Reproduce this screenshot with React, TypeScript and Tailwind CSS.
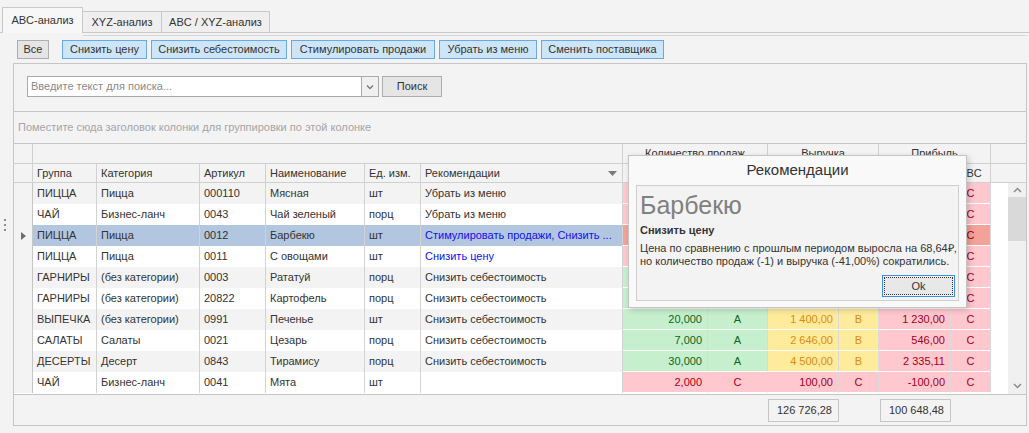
import React from "react";

type Tone = "g" | "y" | "r";
type Row = {
  grp: string;
  cat: string;
  art: string;
  name: string;
  unit: string;
  rec: string;
  recBlue?: boolean;
  q: string;
  qa: string;
  qt: Tone;
  v: string;
  va: string;
  vt: Tone;
  p: string;
  pa: string;
  pt: Tone;
};

// Values of rows 1-6 in the numeric columns lie under the popup and are not visible.
const rows: Row[] = [
  { grp: "ПИЦЦА", cat: "Пицца", art: "000110", name: "Мясная", unit: "шт", rec: "Убрать из меню", q: "", qa: "", qt: "r", v: "", va: "", vt: "r", p: "", pa: "C", pt: "r" },
  { grp: "ЧАЙ", cat: "Бизнес-ланч", art: "0043", name: "Чай зеленый", unit: "порц", rec: "Убрать из меню", q: "", qa: "", qt: "r", v: "", va: "", vt: "r", p: "", pa: "C", pt: "r" },
  { grp: "ПИЦЦА", cat: "Пицца", art: "0012", name: "Барбекю", unit: "шт", rec: "Стимулировать продажи, Снизить ...", recBlue: true, q: "", qa: "", qt: "r", v: "", va: "", vt: "r", p: "", pa: "C", pt: "r" },
  { grp: "ПИЦЦА", cat: "Пицца", art: "0011", name: "С овощами", unit: "шт", rec: "Снизить цену", recBlue: true, q: "", qa: "", qt: "r", v: "", va: "", vt: "r", p: "", pa: "C", pt: "r" },
  { grp: "ГАРНИРЫ", cat: "(без категории)", art: "0003", name: "Рататуй", unit: "порц", rec: "Снизить себестоимость", q: "", qa: "", qt: "g", v: "", va: "", vt: "y", p: "", pa: "C", pt: "r" },
  { grp: "ГАРНИРЫ", cat: "(без категории)", art: "20822", name: "Картофель", unit: "порц", rec: "Снизить себестоимость", q: "", qa: "", qt: "g", v: "", va: "", vt: "y", p: "", pa: "C", pt: "r" },
  { grp: "ВЫПЕЧКА", cat: "(без категории)", art: "0991", name: "Печенье", unit: "шт", rec: "Снизить себестоимость", q: "20,000", qa: "A", qt: "g", v: "1 400,00", va: "B", vt: "y", p: "1 230,00", pa: "C", pt: "r" },
  { grp: "САЛАТЫ", cat: "Салаты", art: "0021", name: "Цезарь", unit: "порц", rec: "Снизить себестоимость", q: "7,000", qa: "A", qt: "g", v: "2 646,00", va: "B", vt: "y", p: "546,00", pa: "C", pt: "r" },
  { grp: "ДЕСЕРТЫ", cat: "Десерт", art: "0843", name: "Тирамису", unit: "порц", rec: "Снизить себестоимость", q: "30,000", qa: "A", qt: "g", v: "4 500,00", va: "B", vt: "y", p: "2 335,11", pa: "C", pt: "r" },
  { grp: "ЧАЙ", cat: "Бизнес-ланч", art: "0041", name: "Мята", unit: "шт", rec: "", q: "2,000", qa: "C", qt: "r", v: "100,00", va: "C", vt: "r", p: "-100,00", pa: "C", pt: "r" },
];

const toneCls = (t: Tone, sel: boolean) => {
  if (t === "g") return "bg-[#c6efce] text-[#0b6623]";
  if (t === "y") return "bg-[#ffeb9c] text-[#dc8d0c]";
  return sel ? "bg-[#f4a199] text-[#9c0006]" : "bg-[#ffc7ce] text-[#a3001e]";
};

function ToneCell({ w, t, sel, children, center }: { w: string; t: Tone; sel: boolean; children: React.ReactNode; center?: boolean }) {
  return (
    <div
      className={`${w} h-[21px] shrink-0 border-r border-b border-r-[#dadada] border-b-white flex items-center ${center ? "justify-center" : "justify-end pr-[5px]"} ${toneCls(t, sel)}`}
    >
      {children}
    </div>
  );
}

function LeftCell({ w, children, cls = "" }: { w: string; children?: React.ReactNode; cls?: string }) {
  return (
    <div className={`${w} h-[21px] shrink-0 border-r border-[#d2d2d2] pl-[4px] flex items-center whitespace-nowrap overflow-hidden ${cls}`}>
      {children}
    </div>
  );
}

export default function App() {
  return (
    <div className="relative w-[1029px] h-[433px] overflow-hidden bg-[#f3f3f3] text-[11px] text-[#333] font-['Liberation_Sans',Arial,sans-serif]">
      {/* Tabs */}
      <div className="flex items-end h-[33px] pl-[2px] border-b border-[#c9c9c9]">
        <div className="w-[81px] h-[26px] -mb-px border border-b-0 border-[#c9c9c9] bg-[#f7f7f7] flex items-center justify-center pb-[1px]">
          ABC-анализ
        </div>
        <div className="w-[79px] h-[21px] border border-l-0 border-b-0 border-[#c9c9c9] bg-[#efefef] flex items-center justify-center">
          XYZ-анализ
        </div>
        <div className="w-[108px] h-[21px] border border-l-0 border-b-0 border-[#c9c9c9] bg-[#efefef] flex items-center justify-center">
          ABC / XYZ-анализ
        </div>
      </div>

      {/* Toolbar */}
      <div className="mt-[2px] ml-[83px] mr-[2px] h-0 border-t border-[#d6d6d6]" />
      <div className="h-[27px] flex items-start pt-[4px] pl-[17px]">
        <div className="w-[32px] h-[19px] border border-[#adadad] bg-[#e5e5e5] flex items-center justify-center">Все</div>
        <div className="flex gap-[4px] ml-[13px]">
          {["Снизить цену", "Снизить себестоимость", "Стимулировать продажи", "Убрать из меню", "Сменить поставщика"].map((b, i) => (
            <div
              key={b}
              className={`h-[19px] border border-[#6aa8e3] bg-[#cde5f8] flex items-center justify-center ${
                ["w-[85px]", "w-[136px]", "w-[144px]", "w-[98px]", "w-[123px]"][i]
              }`}
            >
              {b}
            </div>
          ))}
        </div>
      </div>

      {/* Splitter grip */}
      <div className="absolute left-[4px] top-[219px] flex flex-col gap-[3px]">
        <div className="w-[2px] h-[2px] bg-[#8a8a8a]" />
        <div className="w-[2px] h-[2px] bg-[#8a8a8a]" />
        <div className="w-[2px] h-[2px] bg-[#8a8a8a]" />
      </div>

      {/* Grid */}
      <div className="ml-[13px] w-[1014px] border border-[#c6c6c6] bg-[#f3f3f3]">
        {/* search */}
        <div className="h-[48px] border-b border-[#c6c6c6] flex items-start pt-[12px] pl-[13px]">
          <div className="w-[335px] h-[21px] bg-white border border-[#a9a9a9] flex items-center pl-[3px] text-[#8a8a8a]">
            Введите текст для поиска...
          </div>
          <div className="w-[17px] h-[21px] border border-l-0 border-[#a9a9a9] bg-[#f0f0f0] flex items-center justify-center">
            <svg width="8" height="6" viewBox="0 0 8 6">
              <path d="M1 1.5 L4 4.5 L7 1.5" fill="none" stroke="#7a7a7a" strokeWidth="1.4" />
            </svg>
          </div>
          <div className="ml-[3px] w-[60px] h-[21px] border border-[#adadad] bg-[#e5e5e5] flex items-center justify-center">Поиск</div>
        </div>
        {/* group panel */}
        <div className="h-[32px] border-b border-[#c6c6c6] flex items-center pl-[4px] text-[#a5a5a5]">
          Поместите сюда заголовок колонки для группировки по этой колонке
        </div>
        {/* band row */}
        <div className="flex h-[20px] border-b border-[#d0d0d0]">
          <div className="w-[19px] shrink-0 border-r border-[#d0d0d0]" />
          <div className="w-[590px] shrink-0 border-r border-[#d0d0d0]" />
          <div className="w-[145px] shrink-0 border-r border-[#d0d0d0] flex items-center justify-center">Количество продаж</div>
          <div className="w-[111px] shrink-0 border-r border-[#d0d0d0] flex items-center justify-center">Выручка</div>
          <div className="w-[112px] shrink-0 border-r border-[#d0d0d0] flex items-center justify-center">Прибыль</div>
          <div className="flex-1" />
        </div>
        {/* header row */}
        <div className="flex h-[19px] border-b border-[#d0d0d0]">
          <div className="w-[19px] shrink-0 border-r border-[#d0d0d0]" />
          {[
            ["w-[64px]", "Группа"],
            ["w-[103px]", "Категория"],
            ["w-[66px]", "Артикул"],
            ["w-[99px]", "Наименование"],
            ["w-[56px]", "Ед. изм."],
          ].map(([w, t]) => (
            <div key={t} className={`${w} shrink-0 border-r border-[#d0d0d0] pl-[4px] flex items-center`}>
              {t}
            </div>
          ))}
          <div className="w-[202px] shrink-0 border-r border-[#d0d0d0] pl-[4px] pr-[5px] flex items-center justify-between">
            <span>Рекомендации</span>
            <svg width="9" height="5" viewBox="0 0 9 5">
              <path d="M0 0 H9 L4.5 5 Z" fill="#7a7a7a" />
            </svg>
          </div>
          <div className="w-[85px] shrink-0 border-r border-[#d0d0d0]" />
          <div className="w-[60px] shrink-0 border-r border-[#d0d0d0]" />
          <div className="w-[71px] shrink-0 border-r border-[#d0d0d0]" />
          <div className="w-[40px] shrink-0 border-r border-[#d0d0d0]" />
          <div className="w-[72px] shrink-0 border-r border-[#d0d0d0]" />
          <div className="w-[40px] shrink-0 border-r border-[#d0d0d0] flex items-center justify-center">ABC</div>
          <div className="flex-1" />
        </div>
        {/* data */}
        <div className="flex h-[211px]">
          <div className="w-[994px] shrink-0 flex flex-col bg-white">
            {rows.map((r, i) => {
              const sel = i === 2;
              const rowBg = sel ? "bg-[#b3c6e0]" : i % 2 === 0 ? "bg-[#f3f3f3]" : "bg-white";
              return (
                <div key={i} className="flex h-[21px] shrink-0">
                  <div className="w-[19px] h-[21px] shrink-0 border-r border-[#c6c6c6] bg-[#f3f3f3] flex items-center justify-center">
                    {sel && (
                      <svg width="5" height="8" viewBox="0 0 5 8">
                        <path d="M0 0 L5 4 L0 8 Z" fill="#6d6d6d" />
                      </svg>
                    )}
                  </div>
                  <LeftCell w="w-[64px]" cls={rowBg}>{r.grp}</LeftCell>
                  <LeftCell w="w-[103px]" cls={rowBg}>{r.cat}</LeftCell>
                  <LeftCell w="w-[66px]" cls={rowBg}>{r.art}</LeftCell>
                  <LeftCell w="w-[99px]" cls={rowBg}>{r.name}</LeftCell>
                  <LeftCell w="w-[56px]" cls={rowBg}>{r.unit}</LeftCell>
                  <LeftCell w="w-[202px]" cls={`${rowBg} ${r.recBlue ? "text-[#1010f0]" : ""}`}>{r.rec}</LeftCell>
                  <ToneCell w="w-[85px]" t={r.qt} sel={sel}>{r.q}</ToneCell>
                  <ToneCell w="w-[60px]" t={r.qt} sel={sel} center>{r.qa}</ToneCell>
                  <ToneCell w="w-[71px]" t={r.vt} sel={sel}>{r.v}</ToneCell>
                  <ToneCell w="w-[40px]" t={r.vt} sel={sel} center>{r.va}</ToneCell>
                  <ToneCell w="w-[72px]" t={r.pt} sel={sel}>{r.p}</ToneCell>
                  <ToneCell w="w-[40px]" t={r.pt} sel={sel} center>{r.pa}</ToneCell>
                  <div className="w-[17px] shrink-0 bg-white" />
                </div>
              );
            })}
          </div>
          {/* scrollbar */}
          <div className="flex-1 bg-[#f0f0f0] flex flex-col items-center">
            <div className="h-[14px] flex items-center justify-center">
              <svg width="9" height="6" viewBox="0 0 9 6">
                <path d="M1 5 L4.5 1.5 L8 5" fill="none" stroke="#8a8a8a" strokeWidth="1.5" />
              </svg>
            </div>
            <div className="w-full h-[44px] bg-[#d9d9d9]" />
            <div className="flex-1" />
            <div className="h-[17px] flex items-center justify-center">
              <svg width="9" height="6" viewBox="0 0 9 6">
                <path d="M1 1 L4.5 4.5 L8 1" fill="none" stroke="#8a8a8a" strokeWidth="1.5" />
              </svg>
            </div>
          </div>
        </div>
        {/* footer */}
        <div className="h-[31px] border-t border-[#c6c6c6] flex items-start pt-[4px]">
          <div className="w-[754px] shrink-0" />
          <div className="w-[71px] h-[23px] shrink-0 border border-[#c6c6c6] flex items-center justify-end pr-[6px]">126 726,28</div>
          <div className="w-[41px] shrink-0" />
          <div className="w-[71px] h-[23px] shrink-0 border border-[#c6c6c6] flex items-center justify-end pr-[6px]">100 648,48</div>
        </div>
      </div>

      {/* Popup */}
      <div className="absolute left-[628px] top-[155px] w-[339px] h-[153px] bg-[#f9f9f9] border border-[#c4c4c4] shadow-[2px_2px_6px_rgba(0,0,0,0.18)] flex flex-col">
        <div className="h-[29px] flex items-center justify-center text-[15px] text-[#333]">Рекомендации</div>
        <div className="mx-[7px] h-[116px] border border-[#cfcfcf] bg-[#f3f3f3] flex flex-col pl-[3px] pr-[3px]">
          <div className="text-[25px] leading-[28px] mt-[5px] text-[#808080]">Барбекю</div>
          <div className="mt-[4px] font-bold text-[11px] leading-[14px] text-[#333]">Снизить цену</div>
          <div className="mt-[5px] text-[11px] leading-[13px] text-[#333] whitespace-nowrap">
            Цена по сравнению с прошлым периодом выросла на 68,64₽,
            <br />
            но количество продаж (-1) и выручка (-41,00%) сократились.
          </div>
          <div className="mt-auto mb-[3px] self-end w-[73px] h-[22px] border border-[#3c8fe0] p-[1px]">
            <div className="w-full h-full border border-dotted border-[#333] bg-[#e8e8e8] flex items-center justify-center">Ok</div>
          </div>
        </div>
      </div>
    </div>
  );
}
